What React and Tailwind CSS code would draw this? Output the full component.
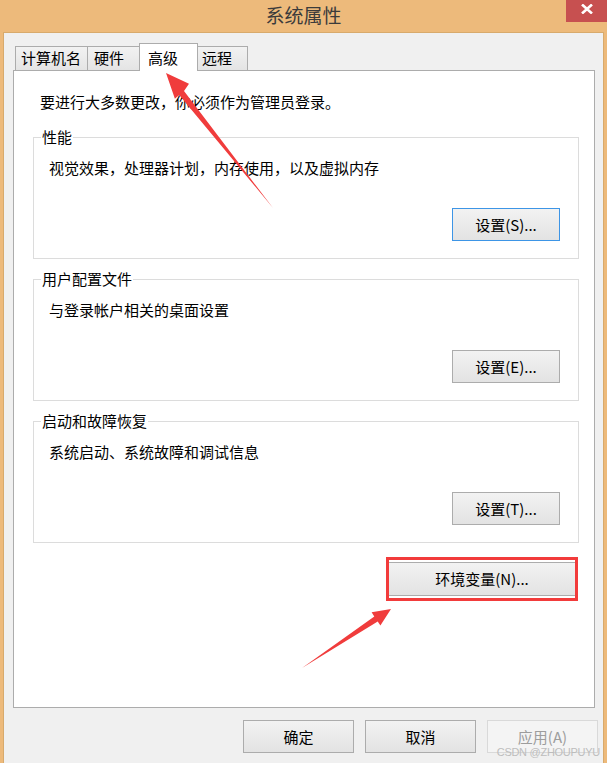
import React from 'react';

const btn =
  'flex items-center justify-center border text-[15px] leading-[20px] text-black bg-gradient-to-b from-[#f2f2f2] to-[#e3e3e3]';

function Group({ title, desc, label, focused, className }) {
  return (
    <fieldset className={`border border-[#dcdcdc] p-0 m-0 ${className || ''}`}>
      <legend className="ml-[7px] px-[1px] text-[15px] leading-[20px] text-black">{title}</legend>
      <div className="pl-[15px] pr-[18px] pb-[17px]">
        <div className="mt-[11px] text-[15px] leading-[20px] text-black">{desc}</div>
        <div className="flex justify-end mt-[30px]">
          <button
            className={`${btn} w-[108px] h-[33px] ${
              focused ? 'border-[#3d95e6]' : 'border-[#acacac]'
            }`}
          >
            {label}
          </button>
        </div>
      </div>
    </fieldset>
  );
}

export default function App() {
  const tabs = [
    { id: 'name', label: '计算机名', w: 'w-[73px]', pl: 'pl-[5px]' },
    { id: 'hw', label: '硬件', w: 'w-[53px]', pl: 'pl-[6px]' },
    { id: 'adv', label: '高级', w: 'w-[59px]', pl: 'pl-[8px]' },
    { id: 'remote', label: '远程', w: 'w-[51px]', pl: 'pl-[4px]' },
  ];
  const active = 'adv';

  return (
    <div className="relative w-[607px] h-[763px] overflow-hidden bg-[#edba7b] font-['Noto_Sans_CJK_SC','Noto_Sans',sans-serif]">
      {/* Title bar */}
      <div className="grid grid-cols-[1fr_auto_1fr] h-[32px]">
        <div />
        <div className="pt-[1px] text-[19px] leading-[27px] text-[#3b3b3b]">系统属性</div>
        <div className="flex justify-end items-start">
          <button className="w-[41px] h-[22px] bg-[#c75050] flex justify-center pt-[4px]">
            <svg width="12" height="10" viewBox="0 0 12 10">
              <path d="M1 0.5 L11 9.5 M11 0.5 L1 9.5" stroke="#fff" strokeWidth="2.6" />
            </svg>
          </button>
        </div>
      </div>

      {/* Window body */}
      <div className="mx-[3px] h-[731px] border border-b-0 border-[#d8aa6c] bg-[#f0f0f0] pt-[10px] pl-[9px] pr-[8px]">
        {/* Tabs */}
        <div className="flex items-end h-[27px] pl-[2px]">
          {tabs.map((tab, i) =>
            tab.id === active ? (
              <div
                key={tab.id}
                className={`relative z-10 -mb-px ${i > 0 ? '-ml-px' : ''} ${tab.w} h-[28px] ${tab.pl} pt-[4px] border border-b-0 border-[#acacac] bg-white text-[15px] leading-[20px] text-black`}
              >
                {tab.label}
              </div>
            ) : (
              <div
                key={tab.id}
                className={`${i > 0 ? '-ml-px' : ''} ${tab.w} h-[24px] ${tab.pl} pt-px border border-b-0 border-[#acacac] bg-gradient-to-b from-[#f2f2f2] to-[#e4e4e4] text-[15px] leading-[20px] text-black`}
              >
                {tab.label}
              </div>
            )
          )}
        </div>

        {/* Tab panel */}
        <div className="h-[638px] border border-[#acacac] bg-white pl-[19px] pr-[15px] pt-[21px]">
          <div className="ml-[7px] text-[15px] leading-[20px] text-black">
            要进行大多数更改，你必须作为管理员登录。
          </div>

          <Group
            className="mt-[15px]"
            title="性能"
            desc="视觉效果，处理器计划，内存使用，以及虚拟内存"
            label="设置(S)..."
            focused
          />
          <Group
            className="mt-[10px]"
            title="用户配置文件"
            desc="与登录帐户相关的桌面设置"
            label="设置(E)..."
          />
          <Group
            className="mt-[10px]"
            title="启动和故障恢复"
            desc="系统启动、系统故障和调试信息"
            label="设置(T)..."
          />

          <div className="flex justify-end mt-[19px] pr-[2px]">
            <div className="relative">
              <button className={`${btn} w-[190px] h-[34px] border-[#acacac]`}>环境变量(N)...</button>
              <div className="absolute -top-[5px] -bottom-[5px] -left-px -right-px border-[3px] border-[#f23b3b] pointer-events-none" />
            </div>
          </div>
        </div>

        {/* Dialog buttons */}
        <div className="flex justify-end gap-[11px] mt-[12px] -mr-[3px]">
          <button className={`${btn} w-[111px] h-[33px] border-[#acacac]`}>确定</button>
          <button className={`${btn} w-[111px] h-[33px] border-[#acacac]`}>取消</button>
          <button className="flex items-center justify-center w-[111px] h-[33px] border border-[#d9d9d9] bg-[#f4f4f4] text-[15px] leading-[20px] text-[#9d9d9d]">
            应用(A)
          </button>
        </div>
      </div>

      {/* Watermark */}
      <div className="absolute right-[7px] bottom-[4px] text-[11px] leading-[13px] tracking-tight text-[#bdbdbd] font-['Liberation_Sans',sans-serif]">
        CSDN @ZHOUPUYU
      </div>

      {/* Annotation arrows */}
      <svg className="absolute inset-0 pointer-events-none" width="607" height="763" viewBox="0 0 607 763">
        <polygon
          fill="#f03c3c"
          points="166,73 174.9,98.7 179.2,94.9 273,208 184.0,91.1 189.0,83.8"
        />
        <polygon
          fill="#f03c3c"
          points="391,609 371.6,612.2 374.3,616.4 302,668 377.7,621.4 380.4,625.6"
        />
      </svg>
    </div>
  );
}
